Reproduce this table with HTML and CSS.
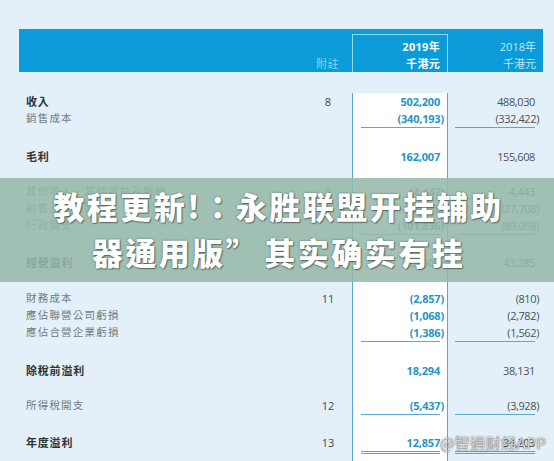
FILE: index.html
```html
<!DOCTYPE html>
<html lang="zh-Hant">
<head>
<meta charset="utf-8">
<title>綜合損益表</title>
<link rel="stylesheet" href="styles.css">
</head>
<body>
<div class="sheet">
  <div class="bar">
    <div class="hc"></div>
    <div class="hc note-h">附註</div>
    <div class="hc cur"><div class="box"><div>2019年</div><div>千港元</div></div></div>
    <div class="hc prev"><div>2018年</div><div>千港元</div></div>
  </div>

  <div class="rows">
    <div class="row gap21"><div class="lab b">收入</div><div class="nt">8</div><div class="c19"><div class="v">502,200</div></div><div class="c18"><div class="v">488,030</div></div></div>
    <div class="row"><div class="lab">銷售成本</div><div class="nt"></div><div class="c19"><div class="v ul">(340,193<span class="p">)</span></div></div><div class="c18"><div class="v ul">(332,422<span class="p">)</span></div></div></div>

    <div class="row gap21"><div class="lab b">毛利</div><div class="nt"></div><div class="c19"><div class="v">162,007</div></div><div class="c18"><div class="v">155,608</div></div></div>

    <div class="row gap18"><div class="lab">其他收入，其他收益及虧損</div><div class="nt">9</div><div class="c19"><div class="v">(4,447<span class="p">)</span></div></div><div class="c18"><div class="v">4,443</div></div></div>
    <div class="row"><div class="lab">銷售及分銷開支</div><div class="nt"></div><div class="c19"><div class="v">(32,119<span class="p">)</span></div></div><div class="c18"><div class="v">(27,708<span class="p">)</span></div></div></div>
    <div class="row"><div class="lab">行政開支</div><div class="nt"></div><div class="c19"><div class="v ul">(101,836<span class="p">)</span></div></div><div class="c18"><div class="v ul">(89,058<span class="p">)</span></div></div></div>

    <div class="row gap20"><div class="lab b">經營溢利</div><div class="nt"></div><div class="c19"><div class="v">23,605</div></div><div class="c18"><div class="v">43,285</div></div></div>

    <div class="row gap19"><div class="lab">財務成本</div><div class="nt">11</div><div class="c19"><div class="v">(2,857<span class="p">)</span></div></div><div class="c18"><div class="v">(810<span class="p">)</span></div></div></div>
    <div class="row"><div class="lab">應佔聯營公司虧損</div><div class="nt"></div><div class="c19"><div class="v">(1,068<span class="p">)</span></div></div><div class="c18"><div class="v">(2,782<span class="p">)</span></div></div></div>
    <div class="row"><div class="lab">應佔合營企業虧損</div><div class="nt"></div><div class="c19"><div class="v ul">(1,386<span class="p">)</span></div></div><div class="c18"><div class="v ul">(1,562<span class="p">)</span></div></div></div>

    <div class="row gap21"><div class="lab b">除稅前溢利</div><div class="nt"></div><div class="c19"><div class="v">18,294</div></div><div class="c18"><div class="v">38,131</div></div></div>

    <div class="row gap18"><div class="lab">所得稅開支</div><div class="nt">12</div><div class="c19"><div class="v ul">(5,437<span class="p">)</span></div></div><div class="c18"><div class="v ul">(3,928<span class="p">)</span></div></div></div>

    <div class="row gap20"><div class="lab b">年度溢利</div><div class="nt">13</div><div class="c19"><div class="v dbl">12,857</div></div><div class="c18"><div class="v dbl">34,203</div></div></div>
  </div>
</div>

<div class="banner">
  <div class="btxt">教程更新!：永胜联盟开挂辅助<br>器通用版<span class="q">”</span>其实确实有挂</div>
</div>

<div class="wm">@智通财经APP</div>
</body>
</html>
```

FILE: styles.css
```css
html, body {
  margin: 0;
  padding: 0;
  height: 100%;
  overflow: hidden;
}
body {
  background: #e4f0f9;
  font-family: "Open Sans", "Noto Sans CJK TC", sans-serif;
  position: relative;
}
.sheet {
  margin: 29px 0 0 19px;
  width: 524px;
}
.bar {
  display: grid;
  grid-template-columns: 284px 49px 96px 95px;
  height: 43px;
  background: #0a9bd8;
  font-size: 11px;
  line-height: 17px;
}
.hc {
  align-self: end;
}
.note-h {
  text-align: center;
  color: #8fd2ef;
  letter-spacing: 0.5px;
}
.cur {
  align-self: stretch;
  padding-top: 5px;
}
.box {
  box-sizing: border-box;
  height: 38px;
  border: 1px solid #8fdcf5;
  border-bottom: 0;
  padding: 3px 7px 0 0;
  text-align: right;
  color: #fff;
  font-weight: 700;
  letter-spacing: 0.3px;
}
.prev {
  text-align: right;
  padding-right: 7px;
  color: #bfe8f8;
}
.rows {
  background: linear-gradient(90deg,
    transparent 0 333px,
    #57a9cd 333px 334px,
    #ffffff 334px 428px,
    #57a9cd 428px 429px,
    transparent 429px);
  padding-bottom: 30px;
}
.row {
  display: grid;
  grid-template-columns: 284px 49px 96px 95px;
  height: 17px;
  line-height: 17px;
  font-size: 11px;
}
.gap18 { margin-top: 18px; }
.gap19 { margin-top: 19px; }
.gap20 { margin-top: 20px; }
.gap21 { margin-top: 21px; }
.lab {
  padding-left: 7px;
  color: #707a80;
  font-size: 10.5px;
  letter-spacing: 1.2px;
  white-space: nowrap;
}
.lab.b {
  color: #2e3336;
  font-weight: 700;
  font-size: 11px;
  letter-spacing: 0.8px;
}
.nt {
  text-align: center;
  color: #3f4548;
  padding-left: 1px;
}
.c19 .v {
  margin: 0 8px 0 9px;
  color: #2596c6;
  font-weight: 700;
  letter-spacing: -0.2px;
}
.c18 .v {
  margin: 0 8px 0 7px;
  color: #4b5154;
  letter-spacing: -0.4px;
}
.v {
  text-align: right;
  height: 17px;
  box-sizing: content-box;
}
.p {
  margin-right: -4px;
}
.v.ul {
  border-bottom: 1px solid #5aa8cc;
}
.v.dbl {
  border-bottom: 3px double #5aa8cc;
}
.banner {
  position: absolute;
  left: 0;
  right: 0;
  top: 178px;
  height: 104px;
  background: rgba(150, 184, 170, 0.88);
  display: flex;
  align-items: center;
  justify-content: center;
}
.btxt {
  color: #ffffff;
  font-family: "Noto Sans CJK SC", sans-serif;
  font-weight: 900;
  font-size: 31px;
  line-height: 46px;
  letter-spacing: 2.5px;
  text-align: center;
  text-shadow: 0 0 2px rgba(40, 50, 45, 0.65), 1px 1px 1px rgba(40, 50, 45, 0.5);
  margin-top: -3px;
  padding-left: 3px;
}
.q {
  margin-right: 5px;
}
.wm {
  position: absolute;
  left: 440px;
  top: 434px;
  font-family: "Noto Sans CJK SC", sans-serif;
  font-size: 15px;
  line-height: 18px;
  color: rgba(255, 255, 255, 0.75);
  text-shadow: 0 0 1px rgba(60, 60, 60, 0.9), 0 0 2px rgba(60, 60, 60, 0.5);
  letter-spacing: 0.5px;
  white-space: nowrap;
}
```
